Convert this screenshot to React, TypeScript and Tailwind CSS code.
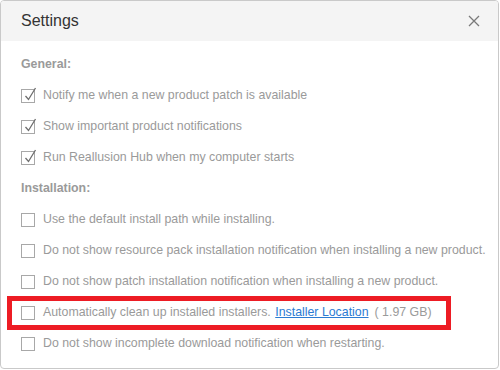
import React from "react";

function Box({ checked }: { checked?: boolean }) {
  return (
    <span className="relative w-[14px] h-[14px] border border-[#a8a8a8] bg-white shrink-0">
      {checked && (
        <svg className="absolute left-[1px] top-[-4px]" width="14" height="16" viewBox="0 0 14 16" fill="none">
          <path d="M2.5 10 L5.5 13.5 L12.5 2" stroke="#6e6e6e" strokeWidth="1.3" />
        </svg>
      )}
    </span>
  );
}

function Row({ checked, children, boxed }: { checked?: boolean; children: React.ReactNode; boxed?: boolean }) {
  return (
    <div className="relative h-[31px] flex items-center gap-[8px]">
      <Box checked={checked} />
      <span className="text-[12.35px] text-[#9a9a9a] whitespace-nowrap">{children}</span>
      {boxed && (
        <div className="absolute left-[-14px] w-[444px] top-[-1px] h-[34px] border-[5px] border-[#ed1c24]" />
      )}
    </div>
  );
}

export default function App() {
  return (
    <div className="w-[500px] h-[370px] bg-white" style={{ fontFamily: '"Liberation Sans", Arial, sans-serif' }}>
      <div className="w-[499px] h-[369px] border border-[#c9c9c9] rounded-[4px] overflow-hidden flex flex-col">
        <div className="h-[40px] bg-[#f4f4f4] flex items-center justify-between pl-[20px] pr-[18px] shrink-0">
          <span className="text-[16px] text-[#333333]">Settings</span>
          <svg width="12" height="12" viewBox="0 0 12 12" fill="none">
            <path d="M1 1 L11 11 M11 1 L1 11" stroke="#7a7a7a" strokeWidth="1.3" />
          </svg>
        </div>
        <div className="pl-[20px] pt-[8px] flex flex-col">
          <div className="h-[31px] flex items-center text-[12.35px] font-bold text-[#9a9a9a]">General:</div>
          <Row checked>Notify me when a new product patch is available</Row>
          <Row checked>Show important product notifications</Row>
          <Row checked>Run Reallusion Hub when my computer starts</Row>
          <div className="h-[31px] flex items-center text-[12.35px] font-bold text-[#9a9a9a]">Installation:</div>
          <Row>Use the default install path while installing.</Row>
          <Row>Do not show resource pack installation notification when installing a new product.</Row>
          <Row>Do not show patch installation notification when installing a new product.</Row>
          <Row boxed>
            Automatically clean up installed installers.{" "}
            <span className="text-[#2b7bd3] underline ml-[1px]">Installer Location</span>
            <span className="ml-[6px]">( 1.97 GB)</span>
          </Row>
          <Row>Do not show incomplete download notification when restarting.</Row>
        </div>
      </div>
    </div>
  );
}
